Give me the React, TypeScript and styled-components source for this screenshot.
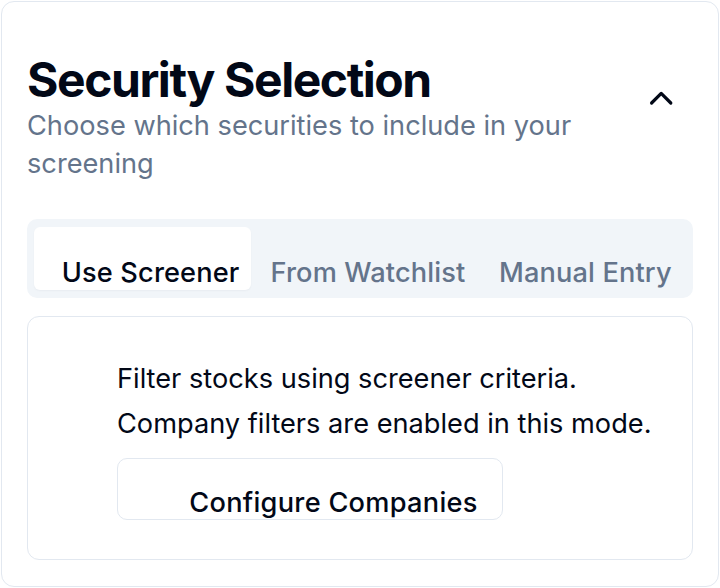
import styled, { createGlobalStyle } from 'styled-components';
import { ChevronUp } from 'lucide-react';

const GlobalStyle = createGlobalStyle`
  html, body {
    margin: 0;
    padding: 0;
    background: #ffffff;
  }

  body {
    font-family: Inter, "Noto Sans", "Liberation Sans", sans-serif;
    color: #020817;
  }

  * {
    box-sizing: border-box;
  }
`;

const Card = styled.section`
  margin: 1px;
  width: 718px;
  height: 586px;
  border: 1px solid #e2e8f0;
  border-radius: 13px;
  background: #ffffff;
  padding: 54px 25px 0 25px;
`;

const Header = styled.div`
  display: flex;
  justify-content: space-between;
  align-items: flex-start;
`;

const HeaderText = styled.div`
  max-width: 600px;
`;

const Title = styled.h2`
  margin: 0;
  font-size: 48px;
  line-height: 48px;
  font-weight: 700;
  letter-spacing: -0.03em;
  color: #020817;
`;

const Subtitle = styled.p`
  margin: 3px 0 0;
  font-size: 27.2px;
  line-height: 38.4px;
  color: #64748b;
`;

const ToggleButton = styled.button`
  display: flex;
  align-items: center;
  justify-content: center;
  width: 64px;
  height: 64px;
  margin-top: 10px;
  padding: 0;
  border: none;
  background: transparent;
  color: #020817;
  cursor: pointer;
`;

const TabsList = styled.div`
  display: grid;
  grid-template-columns: repeat(3, 1fr);
  margin-top: 35px;
  padding: 8px 7px;
  border-radius: 10px;
  background: #f1f5f9;
`;

const Tab = styled.button<{ $active?: boolean }>`
  display: flex;
  align-items: center;
  justify-content: center;
  height: 63px;
  padding: 29px 0 0 16px;
  border: none;
  border-radius: 6px;
  background: ${p => (p.$active ? '#ffffff' : 'transparent')};
  box-shadow: ${p => (p.$active ? '0 1px 2px rgba(15, 23, 42, 0.04)' : 'none')};
  color: ${p => (p.$active ? '#020817' : '#64748b')};
  font-family: inherit;
  font-size: 27.2px;
  line-height: 26px;
  font-weight: 500;
  letter-spacing: 0.005em;
  white-space: nowrap;
  cursor: pointer;
`;

const Panel = styled.div`
  margin-top: 18px;
  border: 1px solid #e2e8f0;
  border-radius: 12px;
  padding: 40px 0 39px 89px;
`;

const PanelText = styled.p`
  margin: 0;
  font-size: 27.2px;
  line-height: 44.8px;
  color: #020817;
`;

const OutlineButton = styled.button`
  display: flex;
  align-items: center;
  justify-content: center;
  width: 386px;
  height: 62px;
  margin-top: 12px;
  padding: 28px 0 0 47px;
  border: 1px solid #e2e8f0;
  border-radius: 10px;
  background: #ffffff;
  color: #020817;
  font-family: inherit;
  font-size: 27.2px;
  line-height: 26px;
  font-weight: 500;
  letter-spacing: 0.01em;
  white-space: nowrap;
  cursor: pointer;
`;

const tabs = ['Use Screener', 'From Watchlist', 'Manual Entry'];

const App = () => {
  return (
    <>
      <GlobalStyle />
      <Card>
        <Header>
          <HeaderText>
            <Title>Security Selection</Title>
            <Subtitle>Choose which securities to include in your screening</Subtitle>
          </HeaderText>
          <ToggleButton aria-label="Collapse">
            <ChevronUp size={38.4} strokeWidth={2} />
          </ToggleButton>
        </Header>

        <TabsList>
          {tabs.map((t, i) => (
            <Tab key={t} $active={i === 0}>
              {t}
            </Tab>
          ))}
        </TabsList>

        <Panel>
          <PanelText>Filter stocks using screener criteria.</PanelText>
          <PanelText>Company filters are enabled in this mode.</PanelText>
          <OutlineButton>Configure Companies</OutlineButton>
        </Panel>
      </Card>
    </>
  );
};

export default App;
